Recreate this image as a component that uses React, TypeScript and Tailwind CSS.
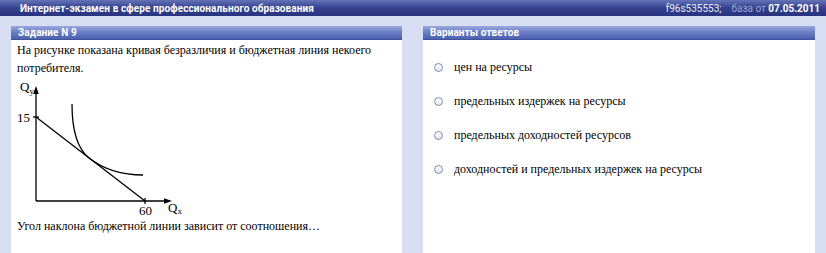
import type { FC, ReactElement } from "react";

const opciones = [
  "цен на ресурсы",
  "предельных издержек на ресурсы",
  "предельных доходностей ресурсов",
  "доходностей и предельных издержек на ресурсы",
];

const Grafico: FC = (): ReactElement => (
  <svg width="180" height="140" viewBox="0 0 180 140" className="block">
    <g stroke="#000" strokeWidth="1.3" fill="none">
      <line x1="19" y1="124" x2="19" y2="14" />
      <line x1="19" y1="124" x2="150" y2="124" />
      <line x1="16" y1="40" x2="22" y2="40" />
      <line x1="128" y1="121" x2="128" y2="127" />
      <line x1="19" y1="40" x2="128" y2="124" />
      <path d="M55,27 C55,55 62,73 72,81 C90,95 110,98 126,98" />
    </g>
    <polygon points="19,9 16.2,17 21.8,17" fill="#000" />
    <polygon points="155,124 147,121.2 147,126.8" fill="#000" />
    <g fontFamily="'Liberation Serif','Times New Roman',serif" fontSize="13" fill="#000">
      <text x="3" y="14">
        Q<tspan fontSize="9" dy="3">y</tspan>
      </text>
      <text x="0" y="45">15</text>
      <text x="122" y="138">60</text>
      <text x="151" y="135">
        Q<tspan fontSize="9" dy="2">x</tspan>
      </text>
    </g>
  </svg>
);

const Cabecera: FC<{ titulo: string }> = ({ titulo }): ReactElement => (
  <div className="h-[14px] flex items-center px-[7px] text-[10px] font-bold tracking-[0.1px] text-white bg-gradient-to-b from-[#9aa8dc] via-[#6a7cc4] to-[#4c60ae] border-b border-[#3f519c] font-['Roboto',sans-serif]">
    {titulo}
  </div>
);

export default function App(): ReactElement {
  return (
    <div className="w-[826px] h-[253px] overflow-hidden bg-[#d7ddf2]">
      <div className="h-[16px] flex items-center justify-between pl-[20px] pr-[6px] text-[10px] font-bold text-white bg-gradient-to-b from-[#6573b8] via-[#34418e] to-[#27337f] font-['Roboto',sans-serif]">
        <span className="tracking-[0.1px]">
          Интернет-экзамен в сфере профессионального образования
        </span>
        <span className="flex gap-[10px] font-normal">
          <span className="text-[#e8ecff]">f96s535553;</span>
          <span>
            <span className="text-[#9aa4d6]">база от </span>
            <span className="font-bold">07.05.2011</span>
          </span>
        </span>
      </div>

      <div className="flex gap-[21px] px-[11px] pt-[10px]">
        <div className="w-[391px] h-[240px] bg-white">
          <Cabecera titulo="Задание N 9" />
          <div className="px-[6px] text-[12px] leading-[18px] text-black font-['Liberation_Serif','Times_New_Roman',serif]">
            <p className="whitespace-nowrap pt-[1px]">
              На рисунке показана кривая безразличия и бюджетная линия некоего
              <br />
              потребителя.
            </p>
            <Grafico />
            <p>Угол наклона бюджетной линии зависит от соотношения…</p>
          </div>
        </div>

        <div className="w-[392px] h-[240px] bg-white">
          <Cabecera titulo="Варианты ответов" />
          <ul className="flex flex-col gap-[16px] pt-[18px] pl-[11px] text-[12px] leading-[18px] text-black font-['Liberation_Serif','Times_New_Roman',serif]">
            {opciones.map((opcion) => (
              <li key={opcion} className="flex items-center gap-[11px]">
                <span className="w-[9px] h-[9px] rounded-full border border-[#7f8db4] bg-gradient-to-b from-[#ffffff] to-[#dfe5f2]" />
                <span>{opcion}</span>
              </li>
            ))}
          </ul>
        </div>
      </div>
    </div>
  );
}
